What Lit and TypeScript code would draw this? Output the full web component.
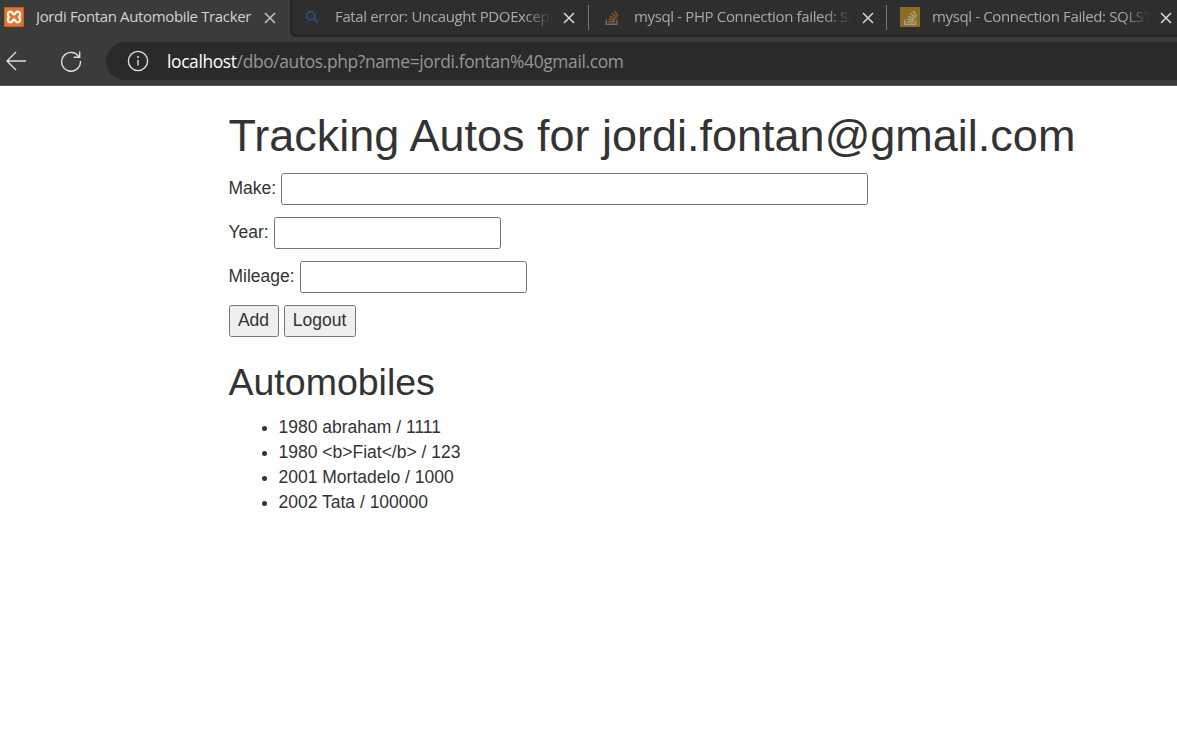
import { LitElement, html, css, svg } from "lit";
import { customElement } from "lit/decorators.js";

const stack = svg`
  <path d="M1.5 9.8V14.2H12.2V9.8" fill="none" stroke="var(--tray)" stroke-width="1.4"/>
  <path d="M3.5 11.8H10.3M3.8 9L10.4 10.2M4.8 6.1L11 8.8M6.9 3.3L12.2 7.5M9.8 1L13.4 6.4" fill="none" stroke="var(--bars)" stroke-width="1.5"/>`;

@customElement("browser-tab")
class BrowserTab extends LitElement {
  static properties = { active: { type: Boolean, reflect: true }, label: {}, icon: {} };
  declare active: boolean;
  declare label: string;
  declare icon: string;

  static styles = css`
    :host { display: flex; align-items: center; flex: none; width: 299px; height: 34px; box-sizing: border-box; color: #a9a9a9; }
    :host([active]) { color: #d2d2d2; }
    .icon { flex: none; width: 20px; height: 20px; display: block; }
    .label { flex: none; width: 218px; margin-left: 12px; height: 22px; line-height: 21px; font-size: 15px; letter-spacing: -0.36px; white-space: nowrap; overflow: hidden; }
    .fade { -webkit-mask-image: linear-gradient(90deg, #000 190px, transparent 218px); mask-image: linear-gradient(90deg, #000 190px, transparent 218px); }
    .close { flex: none; width: 12px; height: 12px; margin: 1px 0 0 10px; stroke: #d8d8d8; stroke-width: 1.5; }
    :host([active]) .close { stroke: #c4c4c4; }
    .tray { --tray: #6b7074; --bars: #8d5526; }
    .gold { --tray: #aaa18a; --bars: #aaa18a; }
  `;

  glyph() {
    switch (this.icon) {
      case "xampp":
        return html`<svg class="icon" viewBox="0 0 20 20"><rect width="20" height="20" rx="1.5" fill="#e5752b"/><rect x=".5" y=".5" width="19" height="19" rx="1" fill="none" stroke="#c46225"/>
          <path d="M6.6 4.6C3.4 4.6 3.2 8.4 5 10C3.2 11.6 3.4 15.4 6.6 15.4C8.8 15.4 8.4 12.6 10 12.6C11.6 12.6 11.2 15.4 13.4 15.4C16.6 15.4 16.8 11.6 15 10C16.8 8.4 16.6 4.6 13.4 4.6C11.2 4.6 11.6 7.4 10 7.4C8.4 7.4 8.8 4.6 6.6 4.6Z" fill="#e87b32" stroke="#fff" stroke-width="2.2" stroke-linejoin="round"/></svg>`;
      case "search":
        return html`<svg class="icon" viewBox="0 0 20 20" fill="none" stroke="#254f77"><circle cx="7.8" cy="8.6" r="4.1" stroke-width="1.9"/><path d="M10.8 11.6L15 15.7" stroke-width="2.2"/></svg>`;
      case "so":
        return html`<svg class="icon tray" viewBox="0 0 20 20"><g transform="translate(2.8 3)">${stack}</g></svg>`;
      default:
        return html`<svg class="icon gold" viewBox="0 0 20 20"><rect width="20" height="20" fill="#8d6d20"/><g transform="translate(3.3 3)">${stack}</g></svg>`;
    }
  }

  render() {
    return html`${this.glyph()}
      <span class="label ${this.active ? "" : "fade"}">${this.label}</span>
      <svg class="close" viewBox="0 0 12 12"><path d="M1 1L11 11M11 1L1 11"/></svg>`;
  }
}

@customElement("app-root")
class AppRoot extends LitElement {
  static styles = css`
    :host { display: block; height: 740px; overflow: hidden; background: #fff; }
    .chrome { background: #3b3b3b; height: 86px; box-sizing: border-box; border-bottom: 1px solid #5c5858; font-family: "Open Sans", "Noto Sans", sans-serif; }
    .tabs { display: flex; height: 37px; overflow: hidden; }
    .first { width: 290px; padding-left: 4px; }
    .rest { display: flex; flex: none; width: 920px; background: #2e2e2e; border-bottom-left-radius: 6px; box-shadow: inset 2px -2px 2px #242424; }
    .rest browser-tab { padding-left: 13px; }
    .rest .second { width: 298px; }
    .rest .third { width: 297px; }
    .sep { flex: none; width: 1px; height: 25px; margin-top: 5px; background: #777; }
    .bar { display: flex; align-items: center; height: 38px; padding-top: 5px; }
    .back { width: 20px; height: 20px; margin-left: 6px; }
    .reload { width: 22px; height: 22px; margin-left: 34px; }
    .address { display: flex; align-items: center; flex: 1; height: 38px; margin-left: 24px; background: #2a2a2a; border-radius: 19px 0 0 19px; color: #969696; font-size: 17.4px; letter-spacing: -0.36px; white-space: nowrap; }
    .info { width: 22px; height: 22px; margin: 0 18px 0 21px; }
    .url { line-height: 24px; }
    .host { color: #fff; }
    .back, .reload, .info { flex: none; fill: none; stroke: #dedede; stroke-width: 1.4; }

    .page { margin-left: 228.5px; font: 17.5px/25px "Liberation Sans", Arial, sans-serif; color: #333; padding-top: 25px; }
    h1, h2 { font-weight: 400; line-height: 1.1; margin: 0; }
    h1 { font-size: 45px; height: 49.5px; margin-bottom: 12.5px; white-space: nowrap; }
    h2 { font-size: 37.5px; margin: 25px 0 11.5px; }
    .row { display: flex; gap: 5px; height: 32px; margin-bottom: 12px; line-height: 30px; }
    .row:last-child { margin-bottom: 0; }
    input, button { box-sizing: border-box; height: 32px; border: 1px solid #767676; border-radius: 2.5px; margin: 0; font: inherit; color: inherit; }
    input { width: 227px; background: #fff; }
    .make { width: 587px; }
    button { background: #efefef; padding: 0 8px; line-height: 28px; padding-bottom: 2px; }
    .add { width: 50px; }
    .logout { width: 72px; }
    ul { margin: 0; padding-left: 50px; }
  `;

  autos = ["1980 abraham / 1111", "1980 <b>Fiat</b> / 123", "2001 Mortadelo / 1000", "2002 Tata / 100000"];

  render() {
    return html`
      <header class="chrome">
        <div class="tabs">
          <browser-tab class="first" active icon="xampp" label="Jordi Fontan Automobile Tracker"></browser-tab>
          <div class="rest">
            <browser-tab class="second" icon="search" label="Fatal error: Uncaught PDOExcepti"></browser-tab>
            <i class="sep"></i>
            <browser-tab class="third" icon="so" label="mysql - PHP Connection failed: SQ"></browser-tab>
            <i class="sep"></i>
            <browser-tab icon="gold" label="mysql - Connection Failed: SQLST"></browser-tab>
          </div>
        </div>
        <div class="bar">
          <svg class="back" viewBox="0 0 20 20"><path d="M20 10H1M10 1L1 10L10 19"/></svg>
          <svg class="reload" viewBox="0 0 22 22"><path d="M19.4 7.5A9.4 9.4 0 1 0 20.4 11M19.7 1.5V7.3H13.7"/></svg>
          <div class="address">
            <svg class="info" viewBox="0 0 22 22"><circle cx="11" cy="11" r="9.6"/><path d="M11 9.8V15.6"/><circle cx="11" cy="7" r=".4"/></svg>
            <span class="url"><span class="host">localhost</span>/dbo/autos.php?name=jordi.fontan%40gmail.com</span>
          </div>
        </div>
      </header>
      <main class="page">
        <h1>Tracking Autos for jordi.fontan@gmail.com</h1>
        <form>
          <div class="row"><label for="make">Make:</label><input id="make" class="make" /></div>
          <div class="row"><label for="year">Year:</label><input id="year" /></div>
          <div class="row"><label for="mileage">Mileage:</label><input id="mileage" /></div>
          <div class="row"><button type="button" class="add">Add</button><button type="button" class="logout">Logout</button></div>
        </form>
        <h2>Automobiles</h2>
        <ul>${this.autos.map((a) => html`<li>${a}</li>`)}</ul>
      </main>`;
  }
}
